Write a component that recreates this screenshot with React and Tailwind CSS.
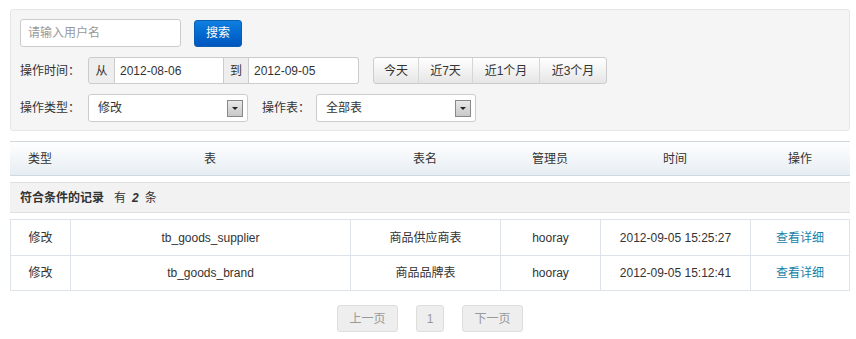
import React from "react";

const rows = [
  { type: "修改", table: "tb_goods_supplier", name: "商品供应商表", admin: "hooray", time: "2012-09-05 15:25:27" },
  { type: "修改", table: "tb_goods_brand", name: "商品品牌表", admin: "hooray", time: "2012-09-05 15:12:41" },
];

const SelectBox = ({ value, width }) => (
  <div className={`flex h-[28px] ${width} items-center justify-between rounded-[3px] border border-[#ccc] bg-white pl-[9px] pr-[4px]`}>
    <span>{value}</span>
    <span className="flex h-[17px] w-[16px] items-center justify-center border border-[#888] bg-gradient-to-b from-[#e8e8e8] to-[#c8c8c8]">
      <span className="h-0 w-0 border-x-[3px] border-t-[3px] border-x-transparent border-t-[#222]" />
    </span>
  </div>
);

const App = () => {
  return (
    <div
      className="h-[339px] w-[856px] bg-white pt-[9px] pl-[10px] text-[12px] text-[#333]"
      style={{ fontFamily: '"Liberation Sans", "Noto Sans CJK SC", sans-serif' }}
    >
      {/* Filter panel */}
      <div className="flex w-[840px] flex-col gap-[10px] rounded-[3px] border border-[#e6e6e6] bg-[#f5f5f5] px-[9px] pt-[9px] pb-[8px]">
        <div className="flex items-center gap-[13px]">
          <div className="flex h-[28px] w-[161px] items-center rounded-[3px] border border-[#ccc] bg-white px-[7px] text-[#999]">
            请输入用户名
          </div>
          <button className="h-[27px] w-[48px] rounded-[3px] border border-[#0a5fb4] bg-gradient-to-b from-[#0f7fe0] to-[#0055bf] text-white">
            搜索
          </button>
        </div>
        <div className="flex items-center">
          <span className="w-[68px]">操作时间：</span>
          <div className="flex h-[27px] items-stretch">
            <span className="flex w-[27px] items-center justify-center rounded-l-[3px] border border-[#ccc] bg-[#eee]">从</span>
            <span className="flex w-[108px] items-center border-y border-[#ccc] bg-white px-[5px]">2012-08-06</span>
            <span className="flex w-[26px] items-center justify-center border border-[#ccc] bg-[#eee]">到</span>
            <span className="flex w-[110px] items-center rounded-r-[3px] border-y border-r border-[#ccc] bg-white px-[5px]">2012-09-05</span>
          </div>
          <div className="ml-[14px] flex h-[27px] rounded-[3px] border border-[#ccc] bg-gradient-to-b from-[#fff] to-[#e6e6e6]">
            <span className="flex w-[45px] items-center justify-center border-r border-[#d6d6d6]">今天</span>
            <span className="flex w-[54px] items-center justify-center border-r border-[#d6d6d6]">近7天</span>
            <span className="flex w-[67px] items-center justify-center border-r border-[#d6d6d6]">近1个月</span>
            <span className="flex w-[66px] items-center justify-center">近3个月</span>
          </div>
        </div>
        <div className="flex items-center">
          <span className="w-[68px]">操作类型：</span>
          <SelectBox value="修改" width="w-[160px]" />
          <span className="ml-[14px] w-[54px]">操作表：</span>
          <SelectBox value="全部表" width="w-[160px]" />
        </div>
      </div>

      {/* Table header */}
      <div className="mt-[10px] grid h-[35px] w-[840px] grid-cols-[60px_280px_150px_100px_150px_100px] items-center border-y border-[#cfd8de] bg-gradient-to-b from-[#ffffff] to-[#e6edf2] text-center">
        <span>类型</span>
        <span>表</span>
        <span>表名</span>
        <span>管理员</span>
        <span>时间</span>
        <span>操作</span>
      </div>

      {/* Summary */}
      <div className="mt-[6px] flex h-[31px] w-[840px] items-center border-y border-[#dfdfdf] bg-[#f2f2f2] px-[10px]">
        <span className="font-bold">符合条件的记录</span>
        <span className="ml-[10px]">有</span>
        <span className="mx-[6px] italic font-bold">2</span>
        <span>条</span>
      </div>

      {/* Rows */}
      <div className="mt-[6px] w-[840px] border border-[#dde3e8]">
        {rows.map((r, i) => (
          <div
            key={i}
            className={`grid h-[35px] grid-cols-[60px_280px_150px_100px_150px_1fr] text-center ${i > 0 ? "border-t border-[#dde3e8]" : ""}`}
          >
            <span className="flex items-center justify-center border-r border-[#dde3e8]">{r.type}</span>
            <span className="flex items-center justify-center border-r border-[#dde3e8]">{r.table}</span>
            <span className="flex items-center justify-center border-r border-[#dde3e8]">{r.name}</span>
            <span className="flex items-center justify-center border-r border-[#dde3e8]">{r.admin}</span>
            <span className="flex items-center justify-center border-r border-[#dde3e8]">{r.time}</span>
            <span className="flex items-center justify-center text-[#1a7fa8]">查看详细</span>
          </div>
        ))}
      </div>

      {/* Pagination */}
      <div className="mt-[14px] flex w-[840px] justify-center gap-[18px] text-[#999]">
        <span className="flex h-[27px] w-[61px] items-center justify-center rounded-[3px] border border-[#ddd] bg-[#eee]">上一页</span>
        <span className="flex h-[27px] w-[28px] items-center justify-center rounded-[3px] border border-[#ddd] bg-[#eee]">1</span>
        <span className="flex h-[27px] w-[61px] items-center justify-center rounded-[3px] border border-[#ddd] bg-[#eee]">下一页</span>
      </div>
    </div>
  );
};

export default App;
